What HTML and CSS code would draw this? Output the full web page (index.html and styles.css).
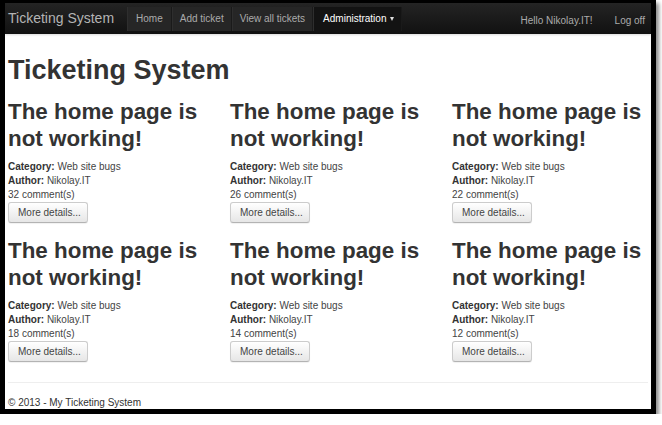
FILE: index.html
```html
<!DOCTYPE html>
<html lang="en">
<head>
<meta charset="utf-8">
<title>Ticketing System</title>
<link rel="stylesheet" href="styles.css">
</head>
<body>
<div class="frame">
  <header class="navbar">
    <a class="brand" href="#">Ticketing System</a>
    <ul class="nav">
      <li><a href="#">Home</a></li>
      <li><a href="#">Add ticket</a></li>
      <li><a href="#">View all tickets</a></li>
      <li class="active"><a href="#">Administration <span class="caret"></span></a></li>
    </ul>
    <ul class="nav-right">
      <li><a href="#">Hello Nikolay.IT!</a></li>
      <li><a href="#">Log off</a></li>
    </ul>
  </header>
  <main class="container">
    <h1 class="title">Ticketing System</h1>
    <div class="grid">
      <div class="card">
        <h2>The home page is not working!</h2>
        <p><b>Category:</b> Web site bugs</p>
        <p><b>Author:</b> Nikolay.IT</p>
        <p>32 comment(s)</p>
        <a class="btn" href="#">More details...</a>
      </div>
      <div class="card">
        <h2>The home page is not working!</h2>
        <p><b>Category:</b> Web site bugs</p>
        <p><b>Author:</b> Nikolay.IT</p>
        <p>26 comment(s)</p>
        <a class="btn" href="#">More details...</a>
      </div>
      <div class="card">
        <h2>The home page is not working!</h2>
        <p><b>Category:</b> Web site bugs</p>
        <p><b>Author:</b> Nikolay.IT</p>
        <p>22 comment(s)</p>
        <a class="btn" href="#">More details...</a>
      </div>
      <div class="card">
        <h2>The home page is not working!</h2>
        <p><b>Category:</b> Web site bugs</p>
        <p><b>Author:</b> Nikolay.IT</p>
        <p>18 comment(s)</p>
        <a class="btn" href="#">More details...</a>
      </div>
      <div class="card">
        <h2>The home page is not working!</h2>
        <p><b>Category:</b> Web site bugs</p>
        <p><b>Author:</b> Nikolay.IT</p>
        <p>14 comment(s)</p>
        <a class="btn" href="#">More details...</a>
      </div>
      <div class="card">
        <h2>The home page is not working!</h2>
        <p><b>Category:</b> Web site bugs</p>
        <p><b>Author:</b> Nikolay.IT</p>
        <p>12 comment(s)</p>
        <a class="btn" href="#">More details...</a>
      </div>
    </div>
    <hr class="sep">
    <footer class="footer">© 2013 - My Ticketing System</footer>
  </main>
</div>
</body>
</html>
```

FILE: styles.css
```css
html, body {
  margin: 0;
  padding: 0;
  background: #fff;
}
body {
  font-family: "Liberation Sans", Arial, sans-serif;
  color: #333;
}
.frame {
  width: 646px;
  border-style: solid;
  border-color: #000;
  border-width: 3px 5px 5px 5px;
  box-shadow: 3px 3px 4px rgba(0, 0, 0, 0.45);
  background: #fff;
}
.navbar {
  height: 31px;
  display: flex;
  align-items: center;
  padding: 0 6px 0 3px;
  background: linear-gradient(#242424, #111);
  box-shadow: 0 1px 2px rgba(0, 0, 0, 0.15);
}
.navbar a {
  text-decoration: none;
}
.brand {
  font-size: 14px;
  color: #b4b4b4;
  margin-right: 13px;
  line-height: 31px;
}
.nav, .nav-right {
  list-style: none;
  margin: 0;
  padding: 0;
  display: flex;
}
.nav li a {
  display: flex;
  align-items: center;
  height: 24px;
  padding: 0 7px;
  font-size: 10px;
  color: #ababab;
  background: #262626;
  border-right: 1px solid #1a1a1a;
  border-left: 1px solid #2e2e2e;
}
.nav li:first-child a {
  padding: 0 8px;
}
.nav li.active a {
  color: #fff;
  background: #131313;
  padding: 0 7px 0 9px;
}
.caret {
  display: inline-block;
  width: 0;
  height: 0;
  margin-left: 4px;
  border-left: 2.5px solid transparent;
  border-right: 2.5px solid transparent;
  border-top: 4px solid #ddd;
}
.nav-right {
  margin-left: auto;
  gap: 22px;
}
.nav-right a {
  font-size: 10px;
  color: #ababab;
}
.container {
  padding: 0 3px;
}
.title {
  margin: 21px 0 0;
  font-size: 27px;
  line-height: 30px;
  font-weight: bold;
}
.grid {
  display: grid;
  grid-template-columns: 200px 200px 200px;
  column-gap: 22px;
  row-gap: 14px;
  margin-top: 13px;
}
.card h2 {
  margin: 0 0 8px;
  font-size: 22.4px;
  line-height: 27px;
  font-weight: bold;
}
.card p {
  margin: 0;
  font-size: 10px;
  line-height: 14px;
  color: #444;
}
.card p b {
  color: #333;
}
.btn {
  display: inline-flex;
  align-items: center;
  box-sizing: border-box;
  height: 21px;
  width: 80px;
  padding: 0 0 0 9px;
  font-size: 10px;
  color: #444;
  text-decoration: none;
  background: linear-gradient(#fff, #e6e6e6);
  border: 1px solid #ccc;
  border-bottom-color: #b3b3b3;
  border-radius: 3px;
  box-shadow: 0 1px 1px rgba(0, 0, 0, 0.06);
}
.sep {
  margin: 20px 0 0;
  border: 0;
  border-top: 1px solid #eee;
  height: 0;
}
.footer {
  margin-top: 13px;
  font-size: 10px;
  line-height: 13px;
  color: #333;
}
```
